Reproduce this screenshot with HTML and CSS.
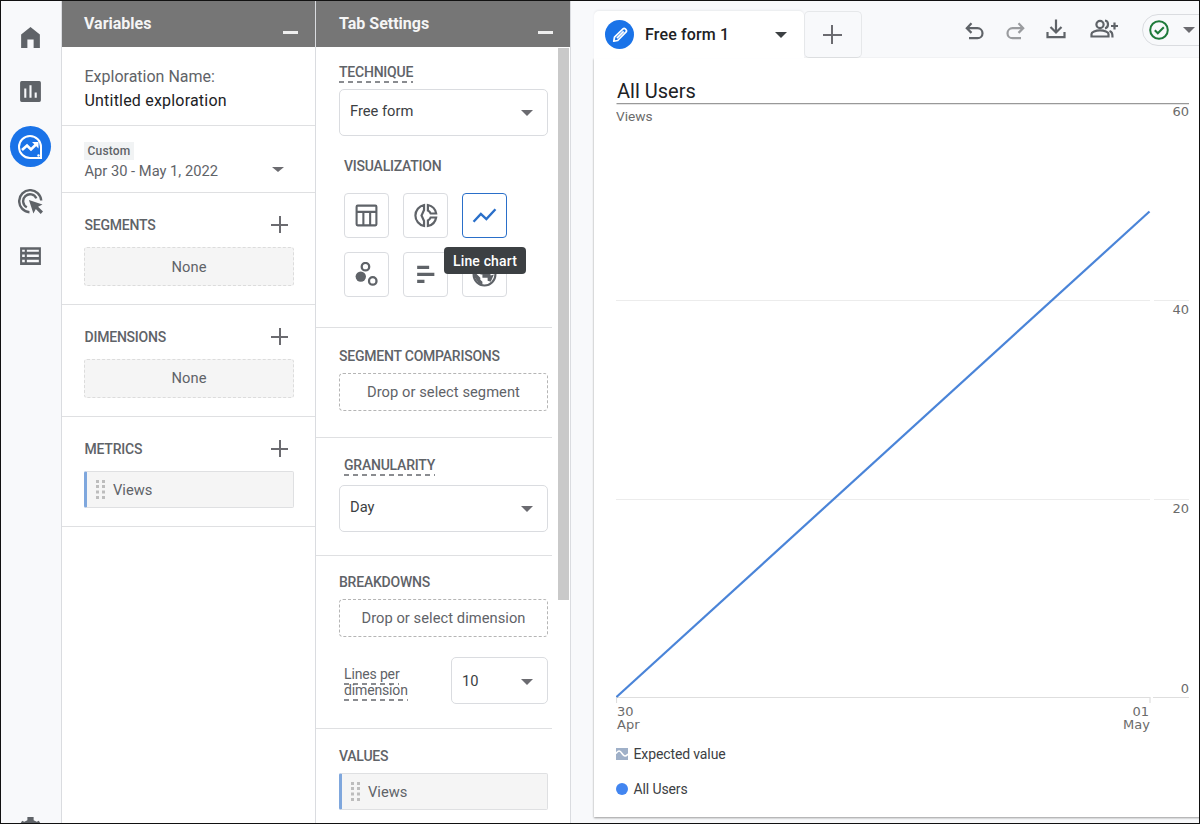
FILE: index.html
```html
<!DOCTYPE html>
<html lang="en">
<head>
<meta charset="utf-8">
<title>Untitled exploration</title>
<link rel="stylesheet" href="styles.css">
</head>
<body>
<div class="app">
  <nav class="rail">
    <svg class="rail-icon" viewBox="0 0 24 24"><path d="M3 9.2 12 2l9 7.200V22h-6v-8H9v8H3z"/></svg>
    <svg class="rail-icon" viewBox="0 0 24 24"><path fill-rule="evenodd" d="M3.500 2h17A1.500 1.500 0 0 1 22 3.500v17a1.500 1.500 0 0 1-1.500 1.500h-17A1.500 1.500 0 0 1 2 20.500v-17A1.500 1.500 0 0 1 3.500 2zM6 9v9h2V9zm5-3v12h2V6zm5 7v5h2v-5z"/></svg>
    <span class="rail-active"><svg viewBox="0 0 26 26"><path d="M13 2a11 11 0 1 0 0 22h11V13A11 11 0 0 0 13 2z" fill="none" stroke="#fff" stroke-width="2"/><path d="m5 16 5-4.500 4 4 6-6" fill="none" stroke="#fff" stroke-width="2.600"/><path d="M15 8h6.500v6.500z" fill="#fff"/><circle cx="21.500" cy="21.500" r="1.200" fill="#fff"/></svg></span>
    <svg class="rail-icon target" viewBox="0 0 24 24"><path d="M11 22.300A10.600 10.600 0 1 1 22.300 11M8.500 17.500A6.600 6.600 0 1 1 17.600 9" fill="none" stroke="#5f6368" stroke-width="2.300"/><path d="m10.500 10.500 13 4.300-4.200 2.200 4.700 4.700-2.200 2.200-4.700-4.700-2.300 4.300z"/></svg>
    <svg class="rail-icon" viewBox="0 0 24 24"><path fill-rule="evenodd" d="M2 4h20v17H2zm2 2.500v2h2.500v-2zm4.500 0v2H20v-2zM4 11v2.500h2.500V11zm4.500 0v2.500H20V11zM4 16v2.500h2.500V16zm4.500 0v2.500H20V16z"/></svg>
    <svg class="rail-icon gear" viewBox="0 0 24 24"><path d="M9 1h6v3l3 1.500 2-1 3 5-2 2v3l2 2-3 4H4l-3-4 2-2v-3l-2-2 3-5 2 1L9 4z"/></svg>
  </nav>

  <aside class="panel variables">
    <header class="panel-head"><span>Variables</span><i class="minimize"></i></header>
    <section class="sec name-sec">
      <p class="name-label">Exploration Name:</p>
      <p class="name-value">Untitled exploration</p>
    </section>
    <section class="sec date-sec">
      <div><span class="badge">Custom</span><p class="date">Apr 30 - May 1, 2022</p></div>
      <i class="caret small"></i>
    </section>
    <section class="sec var-sec">
      <div class="row"><h3>SEGMENTS</h3><i class="plus"></i></div>
      <div class="none first">None</div>
    </section>
    <section class="sec var-sec">
      <div class="row"><h3>DIMENSIONS</h3><i class="plus"></i></div>
      <div class="none">None</div>
    </section>
    <section class="sec var-sec metrics">
      <div class="row"><h3>METRICS</h3><i class="plus"></i></div>
      <div class="chip"><svg class="grip" viewBox="0 0 10 20"><path d="M0 0h3v3H0zM6 0h3v3H6zM0 5h3v3H0zM6 5h3v3H6zM0 10.500h3v3H0zM6 10.500h3v3H6zM0 16h3v3H0zM6 16h3v3H6z"/></svg>Views</div>
    </section>
  </aside>

  <aside class="panel settings">
    <header class="panel-head"><span>Tab Settings</span><i class="minimize"></i></header>
    <div class="scroll">
      <div class="settings-body">
        <section class="sec technique">
          <h3 class="dash tech">TECHNIQUE</h3>
          <div class="select">Free form<i class="caret"></i></div>
          <h3 class="inset vis">VISUALIZATION</h3>
          <div class="grid">
            <span class="tile"><svg viewBox="0 0 24 24"><g fill="none" stroke="#5f6368" stroke-width="2"><rect x="2.500" y="2.500" width="19" height="19" rx="1"/><path d="M2.500 8.500h19M9 8.500v13M15.500 8.500v13"/></g></svg></span>
            <span class="tile"><svg viewBox="0 0 24 24"><g fill="none" stroke="#5f6368" stroke-width="2.100"><path d="M10.600 1.900a10.300 10.300 0 0 0 0 20.200v-4.800L8.200 12l2.400-5.300zM14.300 1.900a10 10 0 0 1 7.900 8.200h-5.200a5 5 0 0 0-2.700-2.800zM14.300 22.100a10 10 0 0 0 7.900-8.200h-5.200a5 5 0 0 1-2.700 2.800z"/></g></svg></span>
            <span class="tile on"><svg viewBox="0 0 24 24"><path d="m1.500 18 7-7.500 5.300 5L22.500 6" fill="none" stroke="#2a6fc9" stroke-width="2.300"/></svg></span>
            <span class="tile"><svg viewBox="0 0 24 24"><circle cx="6.500" cy="14" r="5"/><g fill="none" stroke="#5f6368" stroke-width="2.200"><circle cx="11" cy="4.500" r="3.600"/><circle cx="18" cy="18.200" r="3.600"/></g></svg></span>
            <span class="tile"><svg viewBox="0 0 24 24"><path d="M4 3.500H15.500v3.200H4zm0 6.700H20.500v3.200H4zm0 6.800h7v3.200H4z"/></svg></span>
            <span class="tile"><svg viewBox="0 0 24 24"><circle cx="12" cy="12" r="10.500" fill="none" stroke="#5f6368" stroke-width="2"/><path d="m2 9 6 6v2l2 2v3l-4-2-4-6zM9 9h8l1 4 3-1-3 7-3-1v-3h-5v-3H8zM9 2v3l3 1 3-4z"/></svg></span>
            <span class="tip">Line chart</span>
          </div>
        </section>
        <section class="sec compare">
          <h3>SEGMENT COMPARISONS</h3>
          <div class="drop">Drop or select segment</div>
        </section>
        <section class="sec gran">
          <h3 class="dash inset">GRANULARITY</h3>
          <div class="select">Day<i class="caret"></i></div>
        </section>
        <section class="sec breakdowns">
          <h3>BREAKDOWNS</h3>
          <div class="drop">Drop or select dimension</div>
          <div class="lines">
            <div class="lines-label"><span>Lines per</span><span>dimension</span></div>
            <div class="select ten">10<i class="caret"></i></div>
          </div>
        </section>
        <section class="sec values">
          <h3>VALUES</h3>
          <div class="chip"><svg class="grip" viewBox="0 0 10 20"><path d="M0 0h3v3H0zM6 0h3v3H6zM0 5h3v3H0zM6 5h3v3H6zM0 10.500h3v3H0zM6 10.500h3v3H6zM0 16h3v3H0zM6 16h3v3H6z"/></svg>Views</div>
        </section>
      </div>
      <i class="thumb"></i>
    </div>
  </aside>

  <main class="main">
    <div class="topbar">
      <div class="tab">
        <span class="tab-badge"><svg viewBox="0 0 24 24"><path d="m5.200 18.800.8-4.400L15.300 5.300a1.800 1.800 0 0 1 2.400 0l1 1a1.800 1.800 0 0 1 0 2.400l-9.200 9.300zM8.700 15.300l7.300-7.300" fill="none" stroke="#fff" stroke-width="1.900" stroke-linejoin="round"/></svg></span>
        <span class="tab-name">Free form 1</span><i class="caret dark"></i>
      </div>
      <div class="tab-add"><i class="plus"></i></div>
      <div class="tools">
        <svg class="t-undo" viewBox="0 0 20 20"><path d="M4 17.200h8.500a5 5 0 0 0 0-10H2M6.500 2.200 1.800 7.200l4.700 4.700"/></svg>
        <svg class="t-redo" viewBox="0 0 20 20"><path d="M16 17.200H7.500a5 5 0 0 1 0-10H18M13.500 2.200l4.700 5-4.700 4.700"/></svg>
        <svg class="t-down" viewBox="0 0 20 20"><path d="M10 .5v12.500M4.500 8 10 13.500 15.500 8M1.500 13v5.200h17V13"/></svg>
        <svg class="t-share" viewBox="0 0 28 20"><circle cx="10" cy="5.500" r="3.600"/><path d="M1.500 17.500V15c0-2 4-3.600 8.500-3.600s8.500 1.600 8.500 3.600v2.500zM15 1.500c4 .5 4 7 0 8M19.500 12c2.500 1 3 2 3 6.500M21 7h7M24.500 3.500v7"/></svg>
      </div>
      <div class="status"><svg viewBox="0 0 20 20"><circle cx="10" cy="10" r="8.800"/><path d="m5.800 10.300 3 3 6-6"/></svg><i class="caret"></i></div>
    </div>
    <div class="card">
      <h1>All Users</h1>
      <svg class="chart" viewBox="0 0 584 632">
        <path d="M0.500 .5H573" stroke="#999" stroke-width="1.400"/>
        <path d="M0 197.500H534M538 197.500H573M0 396.500H534M538 396.500H573" stroke="#ececec" stroke-width="1"/>
        <path d="M0 594.500H534V600M.5 594V600M537 594.500H573" stroke="#dedede" stroke-width="1.200" fill="none"/>
        <path d="M.5 594 533.500 108.500" stroke="#4a84d8" stroke-width="2.200"/>
        <text class="unit" x="0" y="18">Views</text>
        <g class="axis">
          <text x="573" y="13" text-anchor="end">60</text>
          <text x="573" y="211" text-anchor="end">40</text>
          <text x="573" y="409.500" text-anchor="end">20</text>
          <text x="573" y="589.500" text-anchor="end">0</text>
          <text x="1" y="612.500">30</text><text x="1" y="626">Apr</text>
          <text x="533" y="612.500" text-anchor="end">01</text><text x="534" y="626" text-anchor="end">May</text>
        </g>
      </svg>
      <div class="legend">
        <span><svg viewBox="0 0 12 12"><path d="M0 0h12v12H0z" fill="#9fb0c8"/><path d="M0 5.500C2.500 2 4 2.500 6 5.500s3.500 3.500 6 .5" fill="none" stroke="#fff" stroke-width="1.500"/></svg>Expected value</span>
        <span><svg viewBox="0 0 12 12"><circle cx="6" cy="6" r="6" fill="#4285f0"/></svg>All Users</span>
      </div>
    </div>
  </main>
</div>
</body>
</html>
```
FILE: styles.css
```css
* { box-sizing: border-box; }
body { margin: 0; font-family: Roboto, sans-serif; font-size: 14.7px; color: #5f6368; }
h1, h3, p { margin: 0; font-weight: 400; }
svg { display: block; flex: none; fill: #5f6368; }
i { flex: none; }
.app { display: flex; width: 1200px; height: 824px; border: 1px solid #111; background: #f8f9fb; overflow: hidden; }

.rail { width: 61px; flex: none; border-right: 1px solid #dadce0; display: flex; flex-direction: column; align-items: center; padding: 24px 2px 0 0; }
.rail-icon { width: 25px; height: 25px; }
.rail-icon + .rail-icon { margin-top: 29px; }
.rail-active { width: 41px; height: 41px; flex: none; border-radius: 50%; background: #1a73e8; margin: 22px 0; display: flex; align-items: center; justify-content: center; }
.rail-active svg { width: 26px; height: 26px; }
.rail .gear { margin-top: 548px; }

.panel { flex: none; background: #fff; border-right: 1px solid #dadce0; display: flex; flex-direction: column; }
.variables { width: 254px; }
.settings { width: 255px; }
.panel-head { height: 46px; flex: none; background: #767676; color: #f5f5f5; font-weight: 700; font-size: 16px; line-height: 45px; display: flex; justify-content: space-between; padding: 0 17px 0 22px; }
.settings .panel-head { padding-left: 23px; }
.minimize { width: 15px; height: 3px; background: #eee; margin-top: 30px; }
.sec { border-bottom: 1px solid #dfe0e2; padding: 0 22px; flex: none; }
h3 { font-size: 14px; line-height: 18px; font-weight: 500; white-space: nowrap; letter-spacing: -.22px; }
.name-sec { height: 79px; padding-top: 18px; font-size: 16px; line-height: 24px; }
.name-label, .name-value { padding-left: .5px; }
.name-value { color: #202124; letter-spacing: .2px; }
.date-sec { height: 67px; display: flex; justify-content: space-between; padding: 16px 31px 0 22px; }
.badge { display: block; width: 50px; height: 18px; background: #f1f3f4; font-size: 12px; line-height: 18px; font-weight: 500; text-align: center; letter-spacing: .2px; }
.date { line-height: 20px; margin-top: 1px; padding-left: .5px; white-space: nowrap; }
.date-sec .small { margin-top: 25px; }
.var-sec { height: 112px; padding-top: 21px; }
.var-sec h3 { padding-left: .5px; }
.metrics { height: 110px; }
.row { display: flex; justify-content: space-between; align-items: center; height: 21px; padding-right: 5px; }
.plus { width: 17px; height: 17px; background: linear-gradient(#6b6b70, #6b6b70) center/17px 2px no-repeat, linear-gradient(#6b6b70, #6b6b70) center/2px 17px no-repeat; }
.none { height: 39px; width: 210px; margin-top: 12px; border: 1px dashed #dcdcdc; background: #f5f5f5; border-radius: 3px; text-align: center; line-height: 36px; letter-spacing: .1px; }
.none.first { line-height: 38px; }
.chip { width: 210px; height: 37px; margin-top: 12px; border: 1px solid #dfe0e2; border-left: 3px solid #7fa7dd; background: #f5f5f5; border-radius: 2px; display: flex; align-items: center; padding-left: 9px; gap: 7px; }
.grip { width: 10px; height: 20px; fill: #bdbdbd; }
.caret { width: 0; height: 0; border: 6px solid transparent; border-top-color: #6b6b70; border-bottom: 0; }
.caret.small { border-width: 5px 6px 0; }
.caret.dark { border-top-color: #3c4043; }

.scroll { position: relative; flex: 1; overflow: hidden; }
.settings-body { width: 236px; }
.settings .sec { padding: 0 0 0 23px; }
.thumb { position: absolute; right: 1px; top: 1px; width: 11px; height: 552px; background: #c9c9c9; }
.settings .technique { height: 281px; padding-top: 17px; }
.dash { width: fit-content; height: 19px; line-height: 16px; background: repeating-linear-gradient(90deg, #8a8c90 0 5px, transparent 5px 9px) bottom/100% 2px no-repeat; }
.inset { margin-left: 5px; }
.select { width: 209px; height: 47px; margin-top: 6px; border: 1px solid #dadce0; border-radius: 5px; color: #3c4043; display: flex; align-items: center; justify-content: space-between; padding: 0 14px 3px 10px; }
.select .caret { margin-top: 4px; }
.vis { margin-top: 21px; }
.grid { position: relative; display: grid; grid-template-columns: repeat(3, 45px); grid-auto-rows: 45px; gap: 14px; margin: 18px 0 0 5px; }
.tile { border: 1px solid #dadce0; border-radius: 4px; display: flex; align-items: center; justify-content: center; }
.tile svg { width: 25px; height: 25px; }
.tile.on { border-color: #2a6fc9; }
.tip { position: absolute; left: 100px; top: 54px; width: 82px; height: 27px; border-radius: 4px; background: #3c4043; color: #fff; font-size: 14px; font-weight: 500; line-height: 28px; text-align: center; letter-spacing: .15px; }
.settings .compare { height: 110px; padding-top: 19px; }
.drop { width: 209px; height: 38px; margin-top: 8px; border: 1px dashed #b5b5b5; border-radius: 4px; text-align: center; line-height: 36px; letter-spacing: .05px; }
.settings .gran { height: 118px; padding-top: 19px; }
.gran .select { margin-top: 9px; }
.settings .breakdowns { height: 173px; padding-top: 17px; }
.lines { display: flex; justify-content: space-between; width: 209px; margin-top: 20px; padding-left: 5px; }
.lines-label { font-size: 14px; letter-spacing: -.15px; line-height: 16px; padding-top: 9px; display: flex; flex-direction: column; align-items: flex-start; }
.lines-label span { height: 19px; background: repeating-linear-gradient(90deg, #8a8c90 0 5px, transparent 5px 9px) bottom/100% 2px no-repeat; }
.lines-label span + span { margin-top: -3px; }
.select.ten { width: 97px; margin: 0; padding-bottom: 0; }
.select.ten .caret { margin-top: 3px; }
.settings .values { height: 120px; padding-top: 18px; border: 0; }
.values .chip { margin-top: 8px; width: 209px; }

.main { flex: 1; min-width: 0; padding: 10px 0 0 23px; }
.topbar { height: 47px; display: flex; }
.tab { width: 210px; height: 47px; background: #fff; border-radius: 5px 5px 0 0; display: flex; align-items: center; padding: 0 17px 0 11px; color: #202124; font-size: 16px; font-weight: 500; flex: none; box-shadow: 0 -1px 2px #e9ebee; }
.tab-badge { width: 29px; height: 29px; border-radius: 50%; background: #1a73e8; display: flex; align-items: center; justify-content: center; margin-right: 11px; }
.tab-badge svg { width: 22px; height: 22px; }
.tab-name { flex: 1; letter-spacing: .15px; }
.tab-add { width: 58px; height: 47px; flex: none; border: 1px solid #e6e8ea; border-bottom-color: #dcdee0; border-radius: 5px; display: flex; align-items: center; justify-content: center; padding-right: 2px; }
.tab-add .plus { width: 19px; height: 19px; background-size: 19px 2px, 2px 19px; }
.tools { display: flex; margin-left: 103px; flex: none; }
.tools svg { fill: none; stroke: #5f6368; stroke-width: 2.2; width: 20px; height: 20px; }
.t-undo, .t-redo { margin-top: 10px; }
.tools .t-redo { margin-left: 20px; stroke: #9a9c9f; }
.tools .t-down { margin: 8px 0 0 21px; }
.tools .t-share { width: 28px; margin: 8px 0 0 24px; }
.status { width: 80px; height: 32px; margin: 3px 0 0 24px; flex: none; border: 1px solid #dadce0; border-radius: 16px; display: flex; align-items: center; padding-left: 6px; gap: 14px; }
.status svg { width: 20px; height: 20px; fill: none; stroke: #1e7a3a; stroke-width: 2; }
.card { height: 759px; background: #fff; padding: 22px 0 0 22px; box-shadow: 0 1px 2px #999; margin-right: -4px; }
h1 { font-size: 20px; line-height: 23px; color: #202124; height: 23px; padding-left: 1px; }
.chart { width: 584px; height: 632px; }
.unit { font-size: 13.7px; fill: #6b6b6b; }
.axis { font-family: "DejaVu Sans", sans-serif; font-size: 13px; fill: #6b6b6b; }
.legend { display: flex; flex-direction: column; gap: 15px; margin-top: 9px; font-size: 14px; letter-spacing: -.12px; line-height: 21px; color: #3c4043; }
.legend span { display: flex; align-items: center; gap: 5.5px; height: 20px; }
.legend svg { width: 12px; height: 12px; }
```
